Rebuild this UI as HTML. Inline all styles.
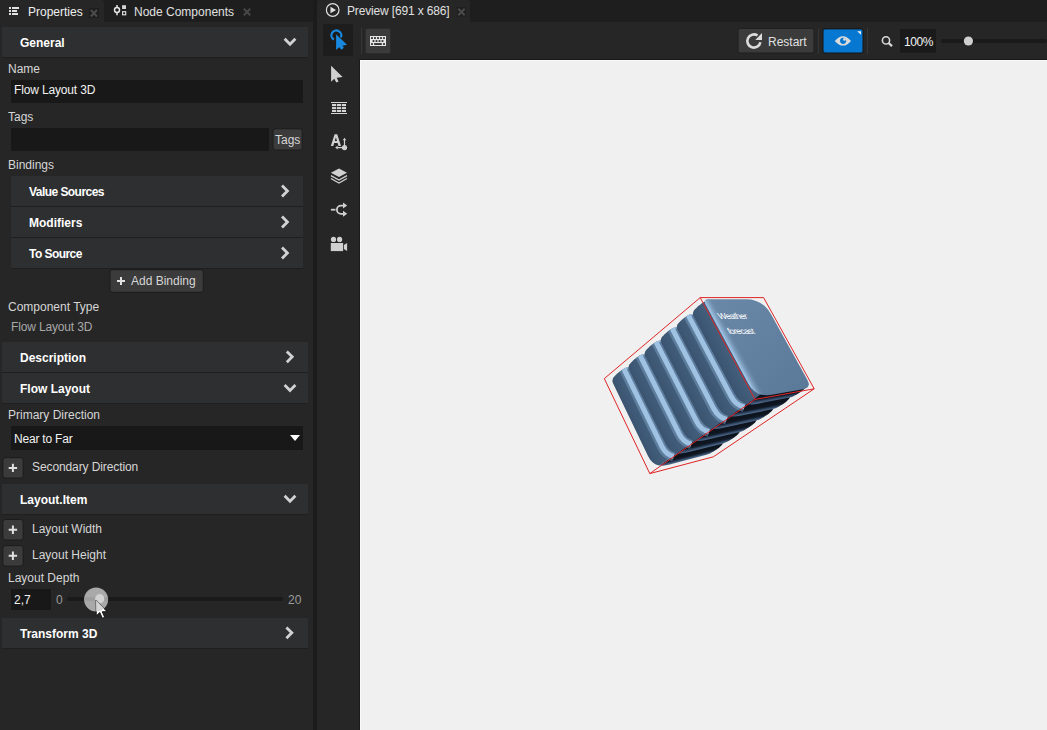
<!DOCTYPE html>
<html><head><meta charset="utf-8">
<style>
*{margin:0;padding:0;box-sizing:border-box}
html,body{width:1047px;height:730px;overflow:hidden;background:#1e1e1e;font-family:"Liberation Sans",sans-serif;font-size:12px;color:#dcdcdc}
.a{position:absolute}
.t{position:absolute;white-space:nowrap;line-height:14px;font-size:12px}
.b{font-weight:bold;color:#fff}
.hdr{position:absolute;left:2px;width:306px;height:31px;background:#2e2f31;border-bottom:1px solid #1f1f1f}
.row{position:absolute;left:11px;width:292px;height:31px;background:#2e2f31;border-bottom:1px solid #1f1f1f}
.inp{position:absolute;background:#181818}
.btn{position:absolute;background:#3a3a3a;border:1px solid #2a2a2a;border-radius:2px}
.lbl{color:#d6d6d6}
</style></head><body>

<!-- LEFT PANEL -->
<div class="a" style="left:0;top:0;width:313px;height:22px;background:#1e1e1e"></div>
<div class="a" style="left:0;top:0;width:104px;height:22px;background:#262626;border-top-right-radius:3px"></div>
<div class="a" style="left:0;top:22px;width:313px;height:708px;background:#262626"></div>
<div class="a" style="left:313px;top:0;width:4px;height:730px;background:#1b1b1b"></div>

<!-- tab icons -->
<svg class="a" style="left:0;top:0" width="313" height="22">
  <g fill="#e2e2e2">
    <rect x="9" y="7" width="2" height="2"/><rect x="12" y="7" width="7" height="2"/>
    <rect x="9" y="10" width="2" height="2"/><rect x="12" y="10" width="5" height="2"/>
    <rect x="9" y="13" width="2" height="2"/><rect x="12" y="13" width="6" height="2"/>
  </g>
  <rect x="89" y="8" width="10" height="10" fill="#1e1e1e"/>
  <path d="M90.8 10 L97 16.4 M97 10 L90.8 16.4" stroke="#4a4a4a" stroke-width="2.1"/>
  <g fill="none" stroke="#e6e6e6" stroke-width="1.5">
    <circle cx="117" cy="10.1" r="2.5"/>
    <path d="M117 5 V7.6 M117 12.6 V15.2"/>
    <rect x="122.6" y="11.7" width="3.1" height="3.1" stroke-width="1.1"/>
  </g>
  <rect x="122.1" y="5.2" width="3.9" height="3.8" fill="#d4d4d4"/>
  <path d="M243.8 8.8 L250.2 15.2 M250.2 8.8 L243.8 15.2" stroke="#474747" stroke-width="2.1"/>
</svg>
<div class="t" style="left:28px;top:5px;color:#f0f0f0">Properties</div>
<div class="t" style="left:134px;top:5px;color:#e0e0e0">Node Components</div>

<!-- General -->
<div class="hdr" style="top:27px"></div>
<div class="t b" style="left:20px;top:36px">General</div>
<div class="t lbl" style="left:8px;top:62px">Name</div>
<div class="inp" style="left:11px;top:80px;width:292px;height:23px"></div>
<div class="t" style="left:14px;top:83px;color:#f2f2f2;letter-spacing:-0.15px">Flow Layout 3D</div>
<div class="t lbl" style="left:8px;top:110px">Tags</div>
<div class="inp" style="left:11px;top:128px;width:258px;height:23px"></div>
<svg class="a" style="left:0;top:0" width="313" height="600">
  <g fill="#3b3b3b" stroke="#1c1c1c" stroke-width="1">
    <rect x="273" y="128.8" width="29.2" height="21.2" rx="2.5"/>
    <rect x="110" y="269.7" width="93.3" height="22.6" rx="2.5"/>
    <rect x="2.9" y="457.7" width="20.3" height="20.3" rx="2.5"/>
    <rect x="2.9" y="519.5" width="20.3" height="20.5" rx="2.5"/>
    <rect x="2.9" y="545.6" width="20.3" height="20.5" rx="2.5"/>
  </g>
</svg>
<div class="t lbl" style="left:275px;top:133px">Tags</div>
<div class="t lbl" style="left:8px;top:158px">Bindings</div>
<div class="row" style="top:176px"></div>
<div class="row" style="top:207px"></div>
<div class="row" style="top:238px"></div>
<div class="t b" style="left:29px;top:185px;letter-spacing:-0.55px">Value Sources</div>
<div class="t b" style="left:29px;top:216px">Modifiers</div>
<div class="t b" style="left:29px;top:247px;letter-spacing:-0.55px">To Source</div>
<div class="t lbl" style="left:131px;top:274px">Add Binding</div>
<div class="t lbl" style="left:8px;top:300px">Component Type</div>
<div class="t" style="left:11px;top:320px;color:#a8a8a8;letter-spacing:-0.15px">Flow Layout 3D</div>

<div class="hdr" style="top:342px"></div>
<div class="t b" style="left:20px;top:351px">Description</div>
<div class="hdr" style="top:373px"></div>
<div class="t b" style="left:20px;top:382px">Flow Layout</div>
<div class="t lbl" style="left:8px;top:408px">Primary Direction</div>
<div class="inp" style="left:11px;top:426px;width:292px;height:24px"></div>
<div class="t" style="left:14px;top:432px;color:#f2f2f2;letter-spacing:-0.2px">Near to Far</div>
<div class="t lbl" style="left:32px;top:460px;letter-spacing:-0.1px">Secondary Direction</div>
<div class="hdr" style="top:484px"></div>
<div class="t b" style="left:20px;top:493px">Layout.Item</div>
<div class="t lbl" style="left:32px;top:522px">Layout Width</div>
<div class="t lbl" style="left:32px;top:548px">Layout Height</div>
<div class="t lbl" style="left:8px;top:571px">Layout Depth</div>
<div class="inp" style="left:11px;top:589px;width:40px;height:21px"></div>
<div class="t" style="left:14px;top:593px;color:#f2f2f2">2,7</div>
<div class="t" style="left:56px;top:593px;color:#9a9a9a">0</div>
<div class="t" style="left:288px;top:593px;color:#9a9a9a">20</div>
<div class="a" style="left:67px;top:597px;width:216px;height:4px;background:#1a1a1a;border-radius:2px"></div>
<div class="hdr" style="top:618px"></div>
<div class="t b" style="left:20px;top:627px">Transform 3D</div>

<svg class="a" style="left:0;top:0" width="313" height="730">
  <g fill="none" stroke="#d2d2d2" stroke-width="2.8" stroke-linecap="square">
    <path d="M285.6 39.8 L290 44.2 L294.4 39.8"/>
    <path d="M283 186.6 L287.4 191 L283 195.4"/>
    <path d="M283 217.6 L287.4 222 L283 226.4"/>
    <path d="M283 248.6 L287.4 253 L283 257.4"/>
    <path d="M287.8 352.4 L292.2 356.8 L287.8 361.2"/>
    <path d="M285.6 386 L290 390.4 L294.4 386"/>
    <path d="M285.6 496.8 L290 501.2 L294.4 496.8"/>
    <path d="M287.4 628.4 L291.8 632.8 L287.4 637.2"/>
  </g>
  <path d="M290 435 L300 435 L295 441 Z" fill="#fff"/>
  <g stroke="#e0e0e0" stroke-width="2">
    <path d="M117 281 H125 M121 277 V285"/>
    <path d="M8.7 467.9 H17.1 M12.9 463.7 V472.1"/>
    <path d="M8.7 529.75 H17.1 M12.9 525.55 V533.95"/>
    <path d="M8.7 555.8 H17.1 M12.9 551.6 V560"/>
  </g>
  <defs><clipPath id="thc"><circle cx="96.1" cy="599.6" r="12"/></clipPath></defs>
  <circle cx="96.1" cy="599.6" r="12" fill="#a9a9a9"/>
  <rect x="84" y="597.3" width="24" height="3.5" fill="#9d9d9d" clip-path="url(#thc)"/>
  <circle cx="99.7" cy="598.7" r="4.6" fill="#d2d2d2"/>
  <path d="M96.1 600 L96.3 615.8 L99.8 612.5 L102.4 618.3 L104.7 617.3 L102.2 611.7 L107 611.7 Z" fill="#ffffff" stroke="#111" stroke-width="0.9" stroke-linejoin="miter"/>
  <path d="M96.1 600 L96.3 615.8 L99.8 612.5 L102.4 618.3 L104.7 617.3 L102.2 611.7 L107 611.7 Z" fill="#d4d4d4" clip-path="url(#thc)"/>
</svg>

<!-- RIGHT PANEL -->
<div class="a" style="left:317px;top:0;width:730px;height:22px;background:#1e1e1e"></div>
<div class="a" style="left:317px;top:0;width:153px;height:22px;background:#262626;border-radius:3px 3px 0 0"></div>
<div class="a" style="left:317px;top:22px;width:730px;height:708px;background:#262626"></div>
<div class="a" style="left:359px;top:59px;width:688px;height:671px;background:#1a1a1a"></div>
<div class="a" style="left:360px;top:60px;width:687px;height:670px;background:#f9f9f9"></div>
<div class="a" style="left:361px;top:61px;width:686px;height:669px;background:#f0f0f0"></div>
<div class="t" style="left:347px;top:4px;color:#e0e0e0;letter-spacing:-0.15px">Preview [691 x 686]</div>
<!--OBJ START-->
<svg class="a" style="left:0;top:0" width="1047" height="730">
<defs>
<linearGradient id="ff" x1="0" y1="0" x2="1" y2="1"><stop offset="0" stop-color="#6a88a7"/><stop offset="1" stop-color="#5a7898"/></linearGradient>
</defs>
<linearGradient id="g5" gradientUnits="userSpaceOnUse" x1="607.2" y1="374.0" x2="622.7" y2="366.5"><stop offset="0" stop-color="#3a536f"/><stop offset="0.5" stop-color="#3f5a77"/><stop offset="1" stop-color="#45617e"/></linearGradient>
<linearGradient id="b5" gradientUnits="userSpaceOnUse" x1="668.2" y1="459.4" x2="669.8" y2="465.7"><stop offset="0" stop-color="#0d141e"/><stop offset="0.3" stop-color="#121b29"/><stop offset="0.6" stop-color="#3a5272"/><stop offset="0.8" stop-color="#526d8c"/><stop offset="1" stop-color="#5a7595"/></linearGradient>
<path d="M715.8 425.9 L722.1 437.0 L723.1 439.1 L723.4 440.9 L723.1 442.4 L722.7 443.8 L721.7 445.2 L720.6 446.3 L719.4 447.4 L718.0 448.4 L716.6 449.4 L715.0 450.5 L713.6 451.4 L712.0 452.3 L710.5 453.2 L708.8 454.0 L706.5 454.8 L668.8 464.7 L667.3 464.9 L663.1 465.7 L659.5 465.5 Z" fill="url(#b5)"/>
<path d="M612.4 380.7 L612.8 379.1 L613.0 378.1 L614.1 376.8 L614.8 376.1 L616.0 374.8 L617.2 373.6 L618.6 372.4 L620.0 371.3 L621.5 370.2 L623.0 369.2 L624.7 368.3 L625.8 367.7 L628.0 367.2 L629.4 366.9 L664.2 363.3 L668.9 363.2 L673.3 363.9 L677.2 365.4 L680.7 367.7 L683.8 370.8 L686.5 374.8 L715.8 425.9 L659.5 465.5 L659.2 465.5 L655.8 464.4 L652.8 462.5 L650.2 459.7 L648.0 456.0 L613.0 383.2 L612.5 381.9 Z" fill="url(#g5)"/>
<clipPath id="hc5"><path d="M612.4 380.7 L612.8 379.1 L613.0 378.1 L614.1 376.8 L614.8 376.1 L616.0 374.8 L617.2 373.6 L618.6 372.4 L620.0 371.3 L621.5 370.2 L623.0 369.2 L624.7 368.3 L625.8 367.7 L628.0 367.2 L629.4 366.9 L664.2 363.3 L668.9 363.2 L673.3 363.9 L677.2 365.4 L680.7 367.7 L683.8 370.8 L686.5 374.8 L722.1 437.0 L723.1 439.1 L723.4 440.9 L723.1 442.4 L722.7 443.8 L721.7 445.2 L720.6 446.3 L719.4 447.4 L718.0 448.4 L716.6 449.4 L715.0 450.5 L713.6 451.4 L712.0 452.3 L710.5 453.2 L708.8 454.0 L706.5 454.8 L668.8 464.7 L667.3 464.9 L663.1 465.7 L659.2 465.5 L655.8 464.4 L652.8 462.5 L650.2 459.7 L648.0 456.0 L613.0 383.2 L612.5 381.9 Z"/></clipPath>
<g clip-path="url(#hc5)">
<path d="M673.8 456.3 L670.1 455.2 L666.9 453.1 L664.1 450.1 L661.8 446.2 L625.1 371.4 L624.6 369.9 L624.4 368.6 L624.7 367.5 L625.4 366.7 L626.6 366.2 L628.2 365.9" fill="none" stroke="#7598ba" stroke-opacity="0.55" stroke-width="10" stroke-linejoin="round"/>
<path d="M673.8 456.3 L670.1 455.2 L666.9 453.1 L664.1 450.1 L661.8 446.2 L625.1 371.4 L624.6 369.9 L624.4 368.6 L624.7 367.5 L625.4 366.7 L626.6 366.2 L628.2 365.9" fill="none" stroke="#a0c2e2" stroke-width="5" stroke-linejoin="round"/>
</g>
<linearGradient id="g4" gradientUnits="userSpaceOnUse" x1="623.3" y1="360.7" x2="638.8" y2="353.0"><stop offset="0" stop-color="#3a536f"/><stop offset="0.5" stop-color="#3f5a77"/><stop offset="1" stop-color="#45617e"/></linearGradient>
<linearGradient id="b4" gradientUnits="userSpaceOnUse" x1="685.7" y1="447.0" x2="687.3" y2="453.6"><stop offset="0" stop-color="#0d141e"/><stop offset="0.3" stop-color="#121b29"/><stop offset="0.6" stop-color="#3a5272"/><stop offset="0.8" stop-color="#526d8c"/><stop offset="1" stop-color="#5a7595"/></linearGradient>
<path d="M732.4 414.1 L738.9 425.5 L739.8 427.6 L740.2 429.5 L739.9 431.0 L739.4 432.4 L738.4 433.8 L737.3 434.9 L736.1 436.0 L734.8 437.0 L733.4 438.0 L731.9 438.9 L730.2 440.0 L728.7 440.9 L727.1 441.8 L725.4 442.6 L723.2 443.4 L686.6 452.4 L685.2 452.7 L680.8 453.4 L676.9 453.2 Z" fill="url(#b4)"/>
<path d="M628.5 367.4 L628.9 365.8 L629.1 364.8 L630.2 363.4 L630.9 362.7 L632.1 361.4 L633.3 360.2 L634.7 359.0 L636.1 357.9 L637.5 356.9 L639.1 355.8 L640.8 354.9 L641.9 354.4 L644.1 353.9 L645.6 353.6 L680.4 350.7 L685.3 350.7 L689.7 351.5 L693.7 353.1 L697.3 355.5 L700.5 358.7 L703.2 362.7 L732.4 414.1 L676.9 453.2 L676.9 453.2 L673.4 452.1 L670.2 450.1 L667.5 447.2 L665.3 443.4 L629.1 369.9 L628.6 368.5 Z" fill="url(#g4)"/>
<clipPath id="hc4"><path d="M628.5 367.4 L628.9 365.8 L629.1 364.8 L630.2 363.4 L630.9 362.7 L632.1 361.4 L633.3 360.2 L634.7 359.0 L636.1 357.9 L637.5 356.9 L639.1 355.8 L640.8 354.9 L641.9 354.4 L644.1 353.9 L645.6 353.6 L680.4 350.7 L685.3 350.7 L689.7 351.5 L693.7 353.1 L697.3 355.5 L700.5 358.7 L703.2 362.7 L738.9 425.5 L739.8 427.6 L740.2 429.5 L739.9 431.0 L739.4 432.4 L738.4 433.8 L737.3 434.9 L736.1 436.0 L734.8 437.0 L733.4 438.0 L731.9 438.9 L730.2 440.0 L728.7 440.9 L727.1 441.8 L725.4 442.6 L723.2 443.4 L686.6 452.4 L685.2 452.7 L680.8 453.4 L676.9 453.2 L673.4 452.1 L670.2 450.1 L667.5 447.2 L665.3 443.4 L629.1 369.9 L628.6 368.5 Z"/></clipPath>
<g clip-path="url(#hc4)">
<path d="M691.4 444.0 L687.7 442.8 L684.4 440.7 L681.5 437.6 L679.1 433.7 L641.3 358.0 L640.6 356.5 L640.5 355.2 L640.8 354.1 L641.5 353.3 L642.7 352.8 L644.3 352.5" fill="none" stroke="#7598ba" stroke-opacity="0.55" stroke-width="10" stroke-linejoin="round"/>
<path d="M691.4 444.0 L687.7 442.8 L684.4 440.7 L681.5 437.6 L679.1 433.7 L641.3 358.0 L640.6 356.5 L640.5 355.2 L640.8 354.1 L641.5 353.3 L642.7 352.8 L644.3 352.5" fill="none" stroke="#a0c2e2" stroke-width="5" stroke-linejoin="round"/>
</g>
<linearGradient id="g3" gradientUnits="userSpaceOnUse" x1="639.3" y1="347.4" x2="654.8" y2="339.5"><stop offset="0" stop-color="#3a536f"/><stop offset="0.5" stop-color="#3f5a77"/><stop offset="1" stop-color="#45617e"/></linearGradient>
<linearGradient id="b3" gradientUnits="userSpaceOnUse" x1="703.3" y1="434.7" x2="704.8" y2="441.5"><stop offset="0" stop-color="#0d141e"/><stop offset="0.3" stop-color="#121b29"/><stop offset="0.6" stop-color="#3a5272"/><stop offset="0.8" stop-color="#526d8c"/><stop offset="1" stop-color="#5a7595"/></linearGradient>
<path d="M749.1 402.4 L755.6 414.0 L756.6 416.1 L756.9 418.0 L756.6 419.6 L756.1 421.0 L755.1 422.4 L754.0 423.5 L752.8 424.6 L751.5 425.6 L750.1 426.6 L748.6 427.5 L746.9 428.6 L745.4 429.5 L743.8 430.4 L742.1 431.2 L739.8 431.9 L704.5 440.2 L703.0 440.5 L698.5 441.1 L694.5 440.9 L694.5 440.9 Z" fill="url(#b3)"/>
<path d="M644.6 354.0 L644.9 352.4 L645.2 351.4 L646.2 350.0 L647.4 348.8 L648.2 348.0 L649.4 346.8 L650.8 345.6 L652.2 344.5 L653.6 343.5 L655.2 342.4 L656.9 341.5 L658.0 341.0 L660.3 340.5 L661.8 340.3 L696.7 338.2 L701.7 338.2 L706.2 339.1 L710.3 340.8 L713.9 343.3 L717.1 346.6 L719.9 350.7 L749.1 402.4 L694.5 440.9 L690.9 439.8 L687.7 437.7 L684.9 434.8 L682.6 430.9 L645.3 356.5 L644.7 355.1 Z" fill="url(#g3)"/>
<clipPath id="hc3"><path d="M644.6 354.0 L644.9 352.4 L645.2 351.4 L646.2 350.0 L647.4 348.8 L648.2 348.0 L649.4 346.8 L650.8 345.6 L652.2 344.5 L653.6 343.5 L655.2 342.4 L656.9 341.5 L658.0 341.0 L660.3 340.5 L661.8 340.3 L696.7 338.2 L701.7 338.2 L706.2 339.1 L710.3 340.8 L713.9 343.3 L717.1 346.6 L719.9 350.7 L755.6 414.0 L756.6 416.1 L756.9 418.0 L756.6 419.6 L756.1 421.0 L755.1 422.4 L754.0 423.5 L752.8 424.6 L751.5 425.6 L750.1 426.6 L748.6 427.5 L746.9 428.6 L745.4 429.5 L743.8 430.4 L742.1 431.2 L739.8 431.9 L704.5 440.2 L703.0 440.5 L698.5 441.1 L694.5 440.9 L690.9 439.8 L687.7 437.7 L684.9 434.8 L682.6 430.9 L645.3 356.5 L644.7 355.1 Z"/></clipPath>
<g clip-path="url(#hc3)">
<path d="M709.1 431.7 L705.2 430.5 L701.8 428.3 L698.9 425.2 L696.4 421.1 L657.4 344.6 L656.7 343.1 L656.6 341.8 L656.9 340.7 L657.6 340.0 L658.8 339.4 L660.5 339.2" fill="none" stroke="#7598ba" stroke-opacity="0.55" stroke-width="10" stroke-linejoin="round"/>
<path d="M709.1 431.7 L705.2 430.5 L701.8 428.3 L698.9 425.2 L696.4 421.1 L657.4 344.6 L656.7 343.1 L656.6 341.8 L656.9 340.7 L657.6 340.0 L658.8 339.4 L660.5 339.2" fill="none" stroke="#a0c2e2" stroke-width="5" stroke-linejoin="round"/>
</g>
<linearGradient id="g2" gradientUnits="userSpaceOnUse" x1="655.4" y1="334.1" x2="670.8" y2="326.1"><stop offset="0" stop-color="#3a536f"/><stop offset="0.5" stop-color="#3f5a77"/><stop offset="1" stop-color="#45617e"/></linearGradient>
<linearGradient id="b2" gradientUnits="userSpaceOnUse" x1="720.8" y1="422.3" x2="722.3" y2="429.4"><stop offset="0" stop-color="#0d141e"/><stop offset="0.3" stop-color="#121b29"/><stop offset="0.6" stop-color="#3a5272"/><stop offset="0.8" stop-color="#526d8c"/><stop offset="1" stop-color="#5a7595"/></linearGradient>
<path d="M765.7 390.7 L772.3 402.4 L773.3 404.6 L773.6 406.6 L773.3 408.1 L772.9 409.6 L771.8 410.9 L770.7 412.1 L769.5 413.1 L768.2 414.2 L766.8 415.1 L765.3 416.1 L763.6 417.2 L762.1 418.1 L760.5 419.0 L758.8 419.8 L756.4 420.5 L722.3 428.0 L720.8 428.3 L716.3 428.9 L712.1 428.6 L712.0 428.5 Z" fill="url(#b2)"/>
<path d="M660.7 340.6 L661.0 339.0 L661.3 338.0 L662.3 336.6 L663.5 335.4 L664.2 334.6 L665.5 333.4 L666.9 332.2 L668.2 331.1 L669.7 330.1 L671.3 329.1 L673.0 328.1 L674.1 327.7 L676.4 327.2 L677.9 327.0 L713.0 325.6 L718.0 325.8 L722.6 326.8 L726.8 328.6 L730.5 331.1 L733.7 334.5 L736.5 338.7 L765.7 390.7 L712.0 428.5 L708.5 427.4 L705.2 425.3 L702.3 422.3 L699.9 418.4 L661.4 343.2 L660.9 341.8 Z" fill="url(#g2)"/>
<clipPath id="hc2"><path d="M660.7 340.6 L661.0 339.0 L661.3 338.0 L662.3 336.6 L663.5 335.4 L664.2 334.6 L665.5 333.4 L666.9 332.2 L668.2 331.1 L669.7 330.1 L671.3 329.1 L673.0 328.1 L674.1 327.7 L676.4 327.2 L677.9 327.0 L713.0 325.6 L718.0 325.8 L722.6 326.8 L726.8 328.6 L730.5 331.1 L733.7 334.5 L736.5 338.7 L772.3 402.4 L773.3 404.6 L773.6 406.6 L773.3 408.1 L772.9 409.6 L771.8 410.9 L770.7 412.1 L769.5 413.1 L768.2 414.2 L766.8 415.1 L765.3 416.1 L763.6 417.2 L762.1 418.1 L760.5 419.0 L758.8 419.8 L756.4 420.5 L722.3 428.0 L720.8 428.3 L716.3 428.9 L712.1 428.6 L708.5 427.4 L705.2 425.3 L702.3 422.3 L699.9 418.4 L661.4 343.2 L660.9 341.8 Z"/></clipPath>
<g clip-path="url(#hc2)">
<path d="M726.7 419.4 L722.8 418.1 L719.3 415.9 L716.3 412.7 L713.7 408.6 L673.5 331.2 L672.8 329.7 L672.6 328.4 L672.9 327.3 L673.7 326.6 L674.9 326.1 L676.6 325.9" fill="none" stroke="#7598ba" stroke-opacity="0.55" stroke-width="10" stroke-linejoin="round"/>
<path d="M726.7 419.4 L722.8 418.1 L719.3 415.9 L716.3 412.7 L713.7 408.6 L673.5 331.2 L672.8 329.7 L672.6 328.4 L672.9 327.3 L673.7 326.6 L674.9 326.1 L676.6 325.9" fill="none" stroke="#a0c2e2" stroke-width="5" stroke-linejoin="round"/>
</g>
<linearGradient id="g1" gradientUnits="userSpaceOnUse" x1="671.5" y1="320.8" x2="686.8" y2="312.6"><stop offset="0" stop-color="#3a536f"/><stop offset="0.5" stop-color="#3f5a77"/><stop offset="1" stop-color="#45617e"/></linearGradient>
<linearGradient id="b1" gradientUnits="userSpaceOnUse" x1="738.3" y1="410.0" x2="739.7" y2="417.3"><stop offset="0" stop-color="#0d141e"/><stop offset="0.3" stop-color="#121b29"/><stop offset="0.6" stop-color="#3a5272"/><stop offset="0.8" stop-color="#526d8c"/><stop offset="1" stop-color="#5a7595"/></linearGradient>
<path d="M782.4 378.9 L789.0 390.9 L790.0 393.2 L790.4 395.1 L790.0 396.7 L789.6 398.1 L788.5 399.5 L787.4 400.6 L786.2 401.7 L784.9 402.7 L783.5 403.7 L782.0 404.7 L780.5 405.6 L778.7 406.7 L777.1 407.5 L775.5 408.3 L773.0 409.1 L740.1 415.8 L738.7 416.1 L734.0 416.6 L729.8 416.3 L729.5 416.2 Z" fill="url(#b1)"/>
<path d="M676.8 327.2 L677.1 325.6 L677.4 324.6 L678.4 323.2 L679.6 322.0 L680.3 321.2 L681.6 320.0 L682.9 318.9 L684.3 317.8 L685.8 316.7 L687.4 315.7 L689.1 314.8 L690.3 314.3 L692.6 313.9 L694.1 313.7 L729.3 313.0 L734.4 313.3 L739.1 314.4 L743.3 316.3 L747.1 319.0 L750.4 322.4 L753.2 326.7 L782.4 378.9 L729.5 416.2 L726.0 415.1 L722.6 412.9 L719.7 409.8 L717.2 405.9 L677.6 329.8 L677.0 328.4 Z" fill="url(#g1)"/>
<clipPath id="hc1"><path d="M676.8 327.2 L677.1 325.6 L677.4 324.6 L678.4 323.2 L679.6 322.0 L680.3 321.2 L681.6 320.0 L682.9 318.9 L684.3 317.8 L685.8 316.7 L687.4 315.7 L689.1 314.8 L690.3 314.3 L692.6 313.9 L694.1 313.7 L729.3 313.0 L734.4 313.3 L739.1 314.4 L743.3 316.3 L747.1 319.0 L750.4 322.4 L753.2 326.7 L789.0 390.9 L790.0 393.2 L790.4 395.1 L790.0 396.7 L789.6 398.1 L788.5 399.5 L787.4 400.6 L786.2 401.7 L784.9 402.7 L783.5 403.7 L782.0 404.7 L780.5 405.6 L778.7 406.7 L777.1 407.5 L775.5 408.3 L773.0 409.1 L740.1 415.8 L738.7 416.1 L734.0 416.6 L729.8 416.3 L726.0 415.1 L722.6 412.9 L719.7 409.8 L717.2 405.9 L677.6 329.8 L677.0 328.4 Z"/></clipPath>
<g clip-path="url(#hc1)">
<path d="M744.4 407.1 L740.3 405.7 L736.8 403.5 L733.6 400.2 L731.0 396.1 L689.6 317.9 L688.9 316.3 L688.7 315.0 L689.0 313.9 L689.8 313.2 L691.0 312.7 L692.7 312.5" fill="none" stroke="#7598ba" stroke-opacity="0.55" stroke-width="10" stroke-linejoin="round"/>
<path d="M744.4 407.1 L740.3 405.7 L736.8 403.5 L733.6 400.2 L731.0 396.1 L689.6 317.9 L688.9 316.3 L688.7 315.0 L689.0 313.9 L689.8 313.2 L691.0 312.7 L692.7 312.5" fill="none" stroke="#a0c2e2" stroke-width="5" stroke-linejoin="round"/>
</g>
<linearGradient id="g0" gradientUnits="userSpaceOnUse" x1="687.5" y1="307.5" x2="702.9" y2="299.2"><stop offset="0" stop-color="#3a536f"/><stop offset="0.5" stop-color="#3f5a77"/><stop offset="1" stop-color="#45617e"/></linearGradient>
<linearGradient id="b0" gradientUnits="userSpaceOnUse" x1="755.9" y1="397.6" x2="757.2" y2="405.2"><stop offset="0" stop-color="#0d141e"/><stop offset="0.3" stop-color="#121b29"/><stop offset="0.6" stop-color="#3a5272"/><stop offset="0.8" stop-color="#526d8c"/><stop offset="1" stop-color="#5a7595"/></linearGradient>
<path d="M799.0 367.2 L805.8 379.4 L806.8 381.7 L807.1 383.6 L806.8 385.3 L806.3 386.7 L805.2 388.1 L804.1 389.2 L802.9 390.3 L801.6 391.3 L800.2 392.3 L798.7 393.3 L797.2 394.2 L795.4 395.2 L793.8 396.1 L792.1 396.9 L789.6 397.6 L756.5 403.9 L751.8 404.4 L747.4 404.0 L747.0 403.9 Z" fill="url(#b0)"/>
<path d="M692.9 313.9 L693.2 312.2 L693.5 311.2 L694.5 309.8 L695.7 308.6 L696.4 307.9 L697.7 306.6 L699.0 305.5 L700.4 304.4 L701.9 303.3 L703.5 302.3 L705.2 301.4 L706.4 301.0 L708.7 300.5 L710.3 300.4 L745.5 300.4 L750.8 300.8 L755.5 302.0 L759.8 304.0 L763.7 306.8 L767.0 310.4 L769.9 314.7 L799.0 367.2 L747.0 403.9 L743.5 402.7 L740.1 400.5 L737.1 397.4 L734.5 393.4 L693.7 316.5 L693.1 315.1 Z" fill="url(#g0)"/>
<path d="M705.7 304.5 L705.0 302.9 L704.8 301.5 L705.1 300.5 L705.9 299.8 L707.1 299.3 L708.9 299.2 L745.7 299.2 L751.1 299.6 L756.0 300.9 L760.5 302.9 L764.4 305.8 L767.9 309.5 L770.9 314.1 L807.3 379.7 L808.4 382.2 L808.8 384.3 L808.4 386.0 L807.3 387.5 L805.4 388.5 L802.9 389.2 L771.6 394.8 L766.6 395.3 L762.0 394.8 L757.9 393.4 L754.2 391.0 L751.0 387.8 L748.3 383.5 Z" fill="url(#ff)"/>
<linearGradient id="fh" gradientUnits="userSpaceOnUse" x1="702.9" y1="299.2" x2="710.8" y2="294.9"><stop offset="0" stop-color="#a6c8ea" stop-opacity="1"/><stop offset="0.35" stop-color="#8fb1d2" stop-opacity="0.7"/><stop offset="1" stop-color="#6585a4" stop-opacity="0"/></linearGradient>
<path d="M705.7 304.5 L705.0 302.9 L704.8 301.5 L705.1 300.5 L705.9 299.8 L707.1 299.3 L708.9 299.2 L745.7 299.2 L751.1 299.6 L756.0 300.9 L760.5 302.9 L764.4 305.8 L767.9 309.5 L770.9 314.1 L807.3 379.7 L808.4 382.2 L808.8 384.3 L808.4 386.0 L807.3 387.5 L805.4 388.5 L802.9 389.2 L771.6 394.8 L766.6 395.3 L762.0 394.8 L757.9 393.4 L754.2 391.0 L751.0 387.8 L748.3 383.5 Z" fill="url(#fh)"/>
<g stroke="#e02424" stroke-width="1" fill="none">
<path d="M700.2 297.6 L763.6 297.6"/>
<path d="M763.6 297.6 L814.2 388.8"/>
<path d="M814.2 388.8 L755.0 399.4"/>
<path d="M755.0 399.4 L700.2 297.6"/>
<path d="M700.2 297.6 L604.3 378.6"/>
<path d="M604.3 378.6 L649.8 473.6"/>
<path d="M649.8 473.6 L755.0 399.4"/>
<path d="M649.8 473.6 L713.4 456.8"/>
<path d="M713.4 456.8 L814.2 388.8"/>
</g>
<g fill="#ffffff" font-family="Liberation Sans" font-size="8.6px">
<text transform="translate(719.8 318.8) skewX(28)" letter-spacing="-0.6">Weather</text>
<text transform="translate(729.3 333.7) skewX(28)" letter-spacing="-0.6">forecast</text>
</g>
</svg>
<!--OBJ END-->

<svg class="a" style="left:317px;top:0" width="730" height="60">
  <circle cx="15.7" cy="10" r="6.3" fill="none" stroke="#e0e0e0" stroke-width="1.2"/>
  <path d="M13.5 6.8 L19 10 L13.5 13.2 Z" fill="#e0e0e0"/>
  <rect x="140" y="7" width="9" height="9.5" fill="#1e1e1e"/>
  <path d="M141.3 8.8 L147.7 15.2 M147.7 8.8 L141.3 15.2" stroke="#4a4a4a" stroke-width="2.1"/>
  <rect x="6" y="24" width="30" height="32" rx="2" fill="#1d1d1d"/>
  <rect x="44" y="28" width="1.2" height="26" fill="#363636"/>
  <rect x="48.5" y="28.5" width="25" height="25" rx="2" fill="#3b3b3b" stroke="#2c2c2c"/>
</svg>
<svg class="a" style="left:0;top:0" width="1047" height="260">
  <!-- blue touch cursor -->
  <path d="M333.9 39.6 A4.9 4.9 0 1 1 340.8 37.4" fill="none" stroke="#1888de" stroke-width="2.2"/>
  <path d="M336.1 34.2 L336.1 49.9 L339.2 47.2 L341.6 49.7 L343.9 47.8 L342.5 45.75 L347 44.7 Z" fill="#1888de" stroke="#1d1d1d" stroke-width="0.8" paint-order="stroke"/>
  <!-- keyboard -->
  <rect x="370" y="36" width="16" height="10" fill="#e6e6e6"/>
  <g fill="#1e1e1e">
    <rect x="371.1" y="37.2" width="1.8" height="1.7"/><rect x="374.1" y="37.2" width="1.8" height="1.7"/><rect x="377.1" y="37.2" width="1.8" height="1.7"/><rect x="380.1" y="37.2" width="1.8" height="1.7"/><rect x="383.1" y="37.2" width="1.8" height="1.7"/>
    <rect x="372.6" y="40.2" width="1.8" height="1.7"/><rect x="375.6" y="40.2" width="1.8" height="1.7"/><rect x="378.6" y="40.2" width="1.8" height="1.7"/><rect x="381.6" y="40.2" width="1.8" height="1.7"/>
    <rect x="371.1" y="43.2" width="1.8" height="1.7"/><rect x="374.1" y="43.2" width="7.7" height="1.7"/><rect x="383.1" y="43.2" width="1.8" height="1.7"/>
  </g>
  <!-- side tool icons -->
  <path d="M331.1 65.7 L331.1 81.7 L334.3 78.8 L336.3 82.6 L338.6 81.5 L336.7 77.7 L342.6 77 Z" fill="#d0d0d0"/>
  <g fill="#d6d6d6">
    <rect x="331" y="102" width="16" height="1"/><rect x="331" y="113" width="16" height="1"/>
    <rect x="332" y="104" width="4.1" height="2.1"/><rect x="336.9" y="104" width="4.1" height="2.1"/><rect x="341.8" y="104" width="4.2" height="2.1"/>
    <rect x="332" y="107.1" width="4.1" height="2"/><rect x="336.9" y="107.1" width="4.1" height="2"/><rect x="341.8" y="107.1" width="4.2" height="2"/>
    <rect x="332" y="110" width="4.1" height="2"/><rect x="336.9" y="110" width="4.1" height="2"/><rect x="341.8" y="110" width="4.2" height="2"/>
  </g>
  <g fill="#d0d0d0">
    <path d="M330.8 146 L334.6 134.3 L337.2 134.3 L341 146 L338.5 146 L337.6 143 L334.2 143 L333.3 146 Z M334.8 141 L337 141 L335.9 137.2 Z" fill-rule="evenodd"/>
    <circle cx="344.5" cy="147.6" r="2.6"/>
    <rect x="343.9" y="139.5" width="1.2" height="8"/>
    <path d="M344.5 137.8 L346.3 140.3 L342.7 140.3 Z"/>
    <rect x="337" y="147" width="7" height="1.2"/>
    <path d="M335.2 147.6 L337.7 145.8 L337.7 149.4 Z"/>
  </g>
  <g fill="#d0d0d0">
    <path d="M330.9 172.7 L339 168.6 L347 172.7 L339 177.1 Z"/>
  </g>
  <g fill="none" stroke="#d0d0d0" stroke-width="1.3">
    <path d="M330.9 175.6 L339 180 L347 175.6"/>
    <path d="M330.9 178.5 L339 183 L347 178.5"/>
  </g>
  <g fill="none" stroke="#d0d0d0" stroke-width="1.8">
    <path d="M330.9 209.7 H335.5"/>
    <path d="M344 205.6 H341 A4.1 4.1 0 0 0 341 213.8 H344"/>
  </g>
  <g fill="#d0d0d0">
    <path d="M343 202.6 L347.2 205.6 L343 208.6 Z"/>
    <path d="M343 210.8 L347.2 213.8 L343 216.8 Z"/>
    <circle cx="333.5" cy="239.4" r="2.6"/><circle cx="339.6" cy="239.4" r="2.6"/>
    <rect x="330.8" y="243" width="12.3" height="8.1"/>
    <path d="M343.9 245 L347.1 243 L347.1 251.1 L343.9 249.1 Z"/>
  </g>
  <!-- Restart button -->
  <rect x="738" y="28.5" width="76" height="24.5" rx="2" fill="#3b3b3b" stroke="#1f1f1f"/>
  <path d="M760.4 42.3 A6.6 6.6 0 1 1 757.5 35.5" fill="none" stroke="#dcdcdc" stroke-width="2.6"/>
  <path d="M762 33 L762 40 L755.3 40 Z" fill="#dcdcdc"/>
  <rect x="818" y="28" width="1" height="26" fill="#363636"/>
  <rect x="823" y="28.9" width="40" height="24.1" rx="2" fill="#0778d2" stroke="#151515" stroke-width="1"/>
  <path d="M834.8 40.9 Q843 31.5 851 40.9 Q843 50.3 834.8 40.9 Z" fill="#dcdcdc"/>
  <circle cx="843.1" cy="40.8" r="3.1" fill="#0778d2"/>
  <circle cx="844.5" cy="39.4" r="1.45" fill="#dcdcdc"/>
  <path d="M857.2 31.3 L861 31.3 L861 34.8 Z" fill="#f0f0f0"/>
  <rect x="867" y="28" width="1" height="26" fill="#363636"/>
  <!-- zoom -->
  <circle cx="886" cy="40.4" r="3.6" fill="none" stroke="#d8d8d8" stroke-width="1.6"/>
  <path d="M888.6 43 L892 46.2" stroke="#d8d8d8" stroke-width="2.4"/>
  <rect x="900" y="29" width="36" height="23.7" fill="#1a1a1a"/>
  <rect x="941" y="39" width="106" height="4" rx="2" fill="#1a1a1a"/>
  <circle cx="968.4" cy="41" r="4.6" fill="#cfcfcf"/>
</svg>
<div class="t" style="left:768px;top:35px;color:#e0e0e0">Restart</div>
<div class="t" style="left:904px;top:35px;color:#f2f2f2;letter-spacing:-0.4px">100%</div>
</body></html>
